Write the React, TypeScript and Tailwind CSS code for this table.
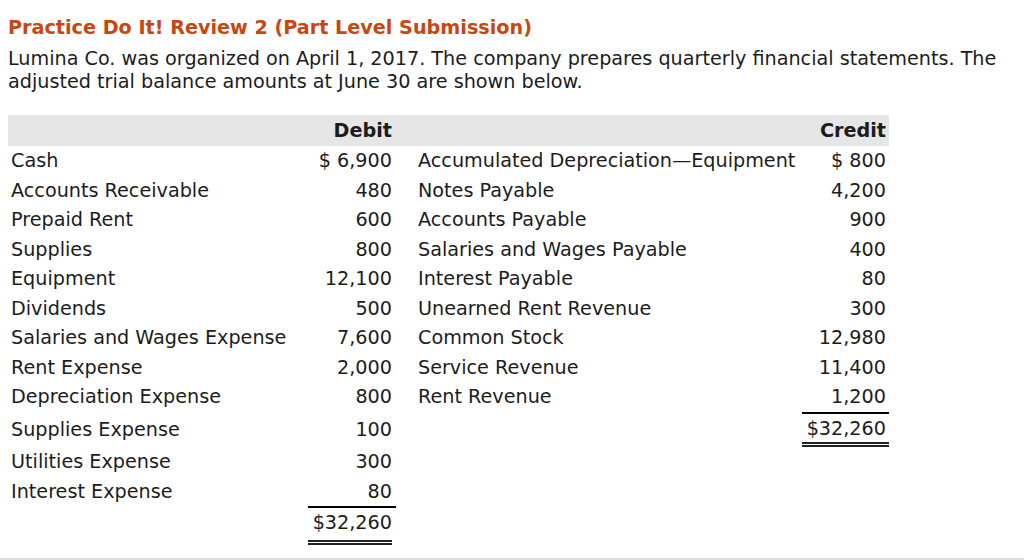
type Line = { name?: string; amount?: string };

const debits: Line[] = [
  { name: 'Cash', amount: '$ 6,900' },
  { name: 'Accounts Receivable', amount: '480' },
  { name: 'Prepaid Rent', amount: '600' },
  { name: 'Supplies', amount: '800' },
  { name: 'Equipment', amount: '12,100' },
  { name: 'Dividends', amount: '500' },
  { name: 'Salaries and Wages Expense', amount: '7,600' },
  { name: 'Rent Expense', amount: '2,000' },
  { name: 'Depreciation Expense', amount: '800' },
  { name: 'Supplies Expense', amount: '100' },
  { name: 'Utilities Expense', amount: '300' },
  { name: 'Interest Expense', amount: '80' },
];

const credits: Line[] = [
  { name: 'Accumulated Depreciation\u2014Equipment', amount: '$ 800' },
  { name: 'Notes Payable', amount: '4,200' },
  { name: 'Accounts Payable', amount: '900' },
  { name: 'Salaries and Wages Payable', amount: '400' },
  { name: 'Interest Payable', amount: '80' },
  { name: 'Unearned Rent Revenue', amount: '300' },
  { name: 'Common Stock', amount: '12,980' },
  { name: 'Service Revenue', amount: '11,400' },
  { name: 'Rent Revenue', amount: '1,200' },
];

// row heights read off the picture
const heights = ['h-[29.5px]', 'h-[29.5px]', 'h-[29.5px]', 'h-[29.5px]', 'h-[29.5px]', 'h-[29.5px]', 'h-[29.5px]', 'h-[29.5px]', 'h-[29.5px]', 'h-[35.5px]', 'h-[29.5px]', 'h-[29.5px]'];

export default function App() {
  return (
    <div className="h-[560px] border-b-2 border-[#dcdce4] bg-white px-2 pt-4 font-['DejaVu_Sans',sans-serif] text-[19.2px] text-[#1c1c1c]">
      <h1 className="text-[19.2px] font-bold leading-[23px] text-[#c8460f]">
        Practice Do It! Review 2 (Part Level Submission)
      </h1>
      <p className="mt-[7.5px] leading-[23px]">
        Lumina Co. was organized on April 1, 2017. The company prepares quarterly financial statements. The
        adjusted trial balance amounts at June 30 are shown below.
      </p>

      <div className="mt-[22.5px] w-[881px] leading-[23px]">
        <div className="grid h-[31px] grid-cols-[300px_88px_406px_87px] items-center bg-[#e6e6e6] font-bold">
          <div />
          <div className="pr-1 text-right">Debit</div>
          <div />
          <div className="pr-[3px] text-right">Credit</div>
        </div>

        {debits.map((d, i) => {
          const c = credits[i];
          const creditTotal = i === 9;
          return (
            <div key={d.name} className={`grid grid-cols-[300px_88px_406px_87px] items-center ${heights[i]}`}>
              <div className="pl-[3px]">{d.name}</div>
              <div className="pr-1 text-right">{d.amount}</div>
              <div className="whitespace-nowrap pl-[22px]">{c?.name}</div>
              {creditTotal ? (
                <div className="flex h-full items-center justify-end border-t-2 border-b-[5px] border-double border-t-black border-b-[#222] pr-[3px] pt-[2px]">
                  $32,260
                </div>
              ) : (
                <div className="pr-[3px] text-right">{c?.amount}</div>
              )}
            </div>
          );
        })}

        <div className="grid grid-cols-[300px_88px_406px_87px]">
          <div />
          <div className="border-t-2 border-t-black pr-1 pt-[2.5px] text-right">
            <div className="border-b-[5px] border-double border-[#222] pb-[6.5px]">$32,260</div>
          </div>
        </div>
      </div>
    </div>
  );
}
